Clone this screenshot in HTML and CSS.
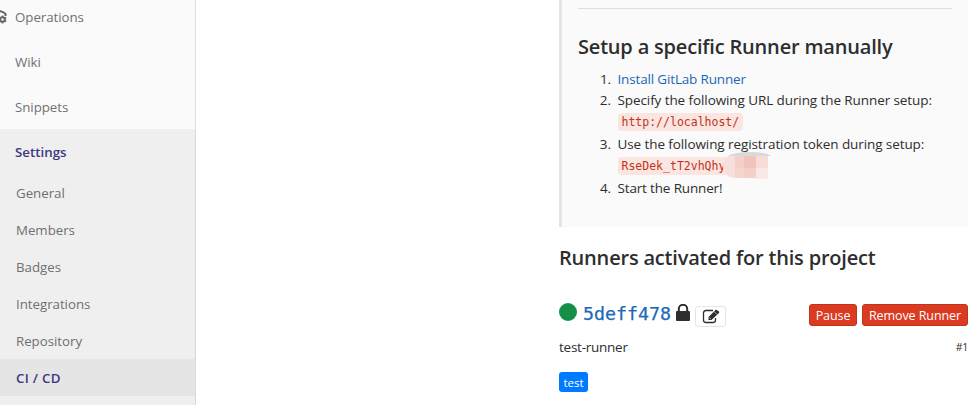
FILE: index.html
```html
<!DOCTYPE html>
<html lang="en">
<head>
<meta charset="utf-8">
<title>CI / CD Settings</title>
<link rel="stylesheet" href="styles.css">
</head>
<body>
<div class="page">
  <nav class="sidebar">
    <a class="item"><svg class="ops-icon" width="16" height="16" viewBox="0 0 16 16" fill="none" stroke="#666" stroke-width="2"><path d="M1 8V6a6 6 0 0 1 9-3.500q2 0 4.500 2.500v2"/><circle cx="11.5" cy="10.5" r="2.3"/><path stroke-width="1.5" d="M11.5 6.5v2M11.5 12.5v2M7.8 8.5l2 1M13.2 11.5l2 1M7.8 12.5l2-1M13.2 9.5l2-1"/></svg>Operations</a>
    <a class="item">Wiki</a>
    <a class="item">Snippets</a>
    <div class="settings">
      <a class="item current">Settings</a>
      <a class="sub">General</a>
      <a class="sub">Members</a>
      <a class="sub">Badges</a>
      <a class="sub">Integrations</a>
      <a class="sub">Repository</a>
      <a class="sub selected">CI / CD</a>
    </div>
  </nav>
  <main class="content">
    <section class="setup">
      <hr>
      <h4>Setup a specific Runner manually</h4>
      <ol>
        <li><a class="link">Install GitLab Runner</a></li>
        <li class="wide">Specify the following URL during the Runner setup: <div class="code-line"><code>http://localhost/</code></div></li>
        <li class="wide">Use the following registration token during setup: <div class="code-line token"><code>RseDek_tT2vhQhy</code><svg class="mask" width="48" height="28" viewBox="0 0 48 28"><path fill="#f8dfdb" d="M8 3h37v21q0 2-2 2H14Q0 26 0 14 0 7 8 3z"/><path fill="#f3cfca" d="M12 4h9v12h-9z"/><path fill="#f0c3bd" d="M21 4h12v12H21z"/><path fill="#f5d5d0" d="M12 16h9v10h-9z"/><path fill="#f4d0cb" d="M21 16h12v10H21z"/><path fill="#f7dcd8" d="M33 4h12v12H33z"/><path fill="#f9e9e6" d="M33 16h12v9q0 2-2 2H33z"/><path fill="#d9d9d9" d="M4 4Q12 0 27 0q16 0 21 4H4z"/></svg></div></li>
        <li>Start the Runner!</li>
      </ol>
    </section>
    <h4 class="activated">Runners activated for this project</h4>
    <div class="runner">
      <span class="status"></span>
      <a class="runner-id">5deff478</a>
      <svg class="lock" width="14" height="17" viewBox="0 0 14 17"><path d="M2.8 8V5a4.2 4.2 0 0 1 8.4 0v3" fill="none" stroke="#2e2e2e" stroke-width="2"/><rect y="7" width="14" height="10" rx="1" fill="#2e2e2e"/></svg>
      <a class="edit"><svg width="18" height="15" viewBox="0 0 18 15"><path d="M11 1.500H4Q1.500 1.500 1.500 4v7Q1.500 13.500 4 13.500h7q2.500 0 2.500-2.500V9" fill="none" stroke="#2e2e2e" stroke-width="1.300"/><path fill="#2e2e2e" d="M6.500 8 13.500 1q.7-.7 1.400 0L17 2.600q.5.700 0 1.400L9.500 11h-3z"/><path d="M12.300 2.700l2.800 2.800M7.500 8.500l1.500 1.500" stroke="#fff" stroke-width=".6"/></svg></a>
      <span class="spacer"></span>
      <a class="btn pause">Pause</a>
      <a class="btn remove">Remove Runner</a>
    </div>
    <div class="details"><span>test-runner</span><small>#1</small></div>
    <span class="tag">test</span>
  </main>
</div>
</body>
</html>
```
FILE: styles.css
```css
* { box-sizing: border-box; }
body { margin: 0; background: #fff; color: #2e2e2e; font: 13.5px/20px "Open Sans", sans-serif; letter-spacing: -0.08px; }
.page { display: flex; width: 980px; height: 405px; overflow: hidden; }
.sidebar { flex: none; width: 196px; height: 405px; background: #fafafa; box-shadow: inset -1px 0 #dedede; color: #707070; overflow: hidden; }
.item { display: flex; align-items: center; height: 45px; padding-left: 15px; font-size: 13.3px; letter-spacing: -0.05px; }
.item:first-child { height: 39px; padding-bottom: 5px; }
.ops-icon { flex: none; margin: 0 8px 0 -24px; }
.settings { height: 276px; background: #efefef; box-shadow: inset -1px 0 #d8d8d8; }
.settings .current { height: 45px; padding-bottom: 0; color: #393982; font-weight: 600; letter-spacing: 0; }
.sub { display: flex; align-items: center; height: 37px; padding-left: 16px; font-size: 13.3px; letter-spacing: -0.03px; }
.selected { background: #e5e5e5; color: #393982; font-weight: 600; letter-spacing: 0.3px; box-shadow: inset -1px 0 #d8d8d8; }
.content { width: 409px; margin-left: 363px; }
.setup { height: 227px; padding: 8px 16px 0; border-left: 3px solid #e5e5e5; background: #fafafa; }
hr { height: 1px; margin: 0; border: 0; background: #dfdfdf; }
h4 { margin: 0; font-size: 20px; line-height: 26px; font-weight: 600; letter-spacing: -0.19px; white-space: nowrap; }
.setup h4 { margin-top: 25px; }
ol { margin: 9px 0 0; padding-left: 39.5px; }
li { height: 21px; line-height: 21px; white-space: nowrap; letter-spacing: -0.16px; }
li::marker { content: counter(list-item) ".\2002"; }
li.wide { height: 44px; letter-spacing: -0.09px; }
.link { color: #1b69b6; }
.code-line { display: flex; height: 19px; margin-top: 2px; }
code { height: 18px; padding: 0 4px; border-radius: 4px; background: #fbe5e1; color: #c0341d; font: 11.5px/18px "DejaVu Sans Mono", monospace; letter-spacing: 0; }
.token { position: relative; }
.mask { position: absolute; left: 105px; top: -5px; }
.activated { margin-top: 18px; }
.runner { display: flex; align-items: center; height: 26px; margin-top: 31px; }
.status { width: 18px; height: 18px; margin: -6px 6px 0 0; border-radius: 50%; background: #168f48; }
.runner-id { color: #1b69b6; font: 18.3px/24px "DejaVu Sans Mono", monospace; letter-spacing: 0; margin-top: -3px; -webkit-text-stroke: 0.25px #1b69b6; }
.lock { margin: -6px 5px 0 5px; }
.edit { display: flex; align-items: center; justify-content: center; width: 31px; height: 21px; margin-top: 2px; border: 1px solid #e5e5e5; border-radius: 3px; }
.spacer { flex: 1; }
.btn { display: flex; align-items: center; justify-content: center; height: 22px; padding-top: 2px; border: 1px solid #c0341d; border-radius: 3px; background: #db3b21; color: #fff; font-size: 12.5px; white-space: nowrap; }
.pause { width: 48px; margin-right: 5px; }
.remove { width: 106px; }
.details { display: flex; justify-content: space-between; margin-top: 9px; letter-spacing: -0.25px; }
small { font-size: 10.5px; }
.tag { display: flex; align-items: center; justify-content: center; width: 29px; height: 20px; margin-top: 15px; padding-top: 1px; border-radius: 3px; background: #007bff; color: #fff; font-size: 11.5px; }
```
